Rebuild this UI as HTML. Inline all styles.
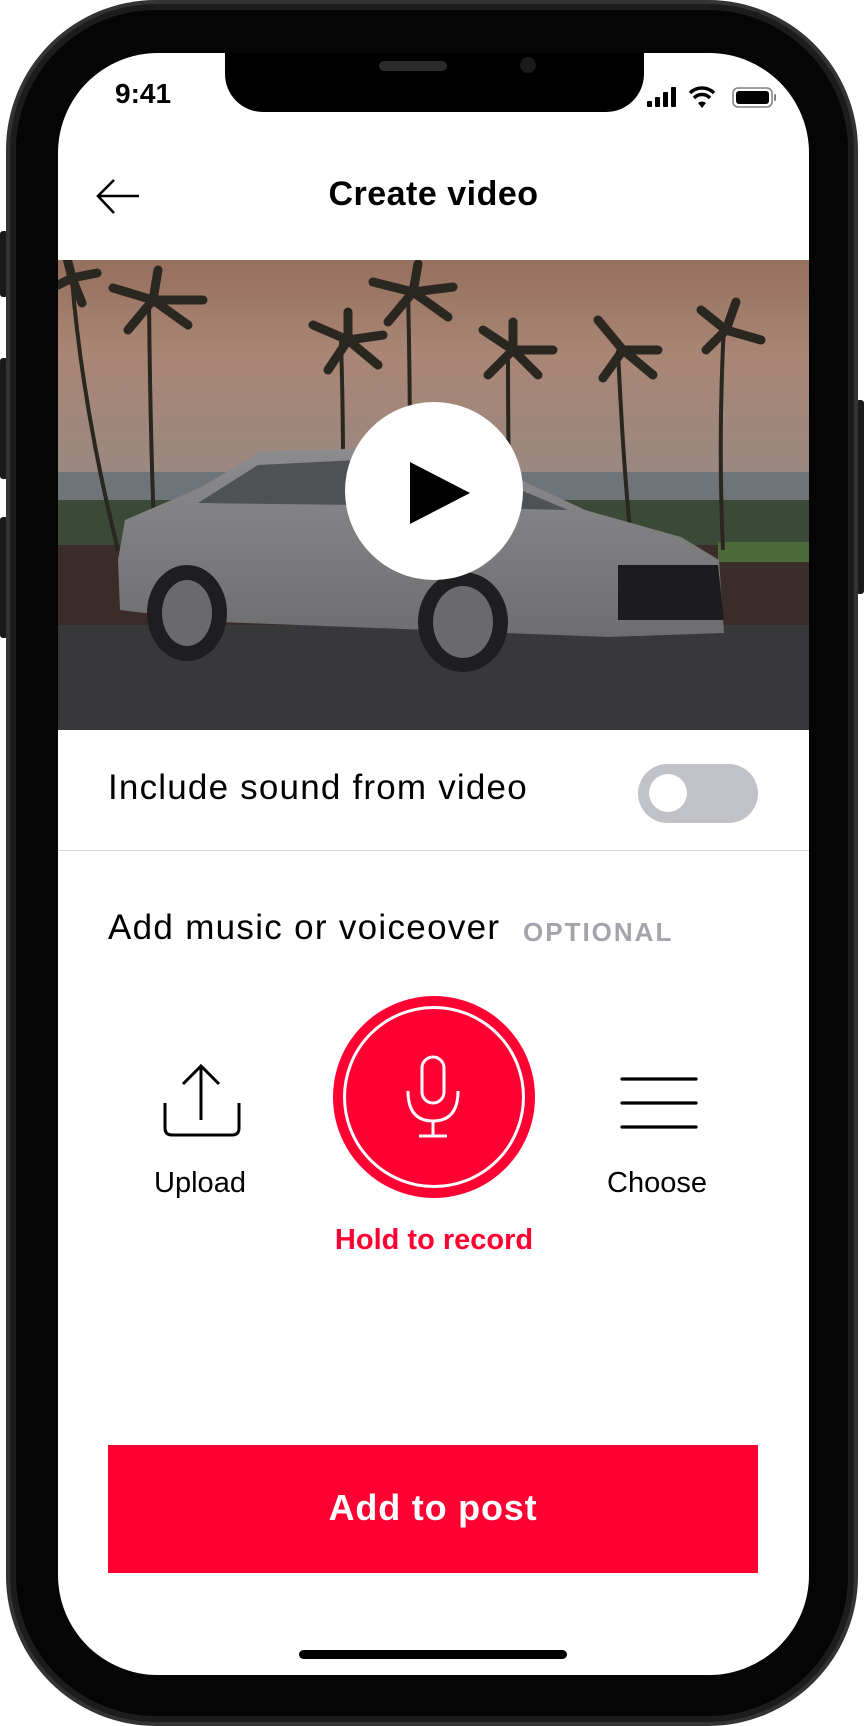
<!DOCTYPE html>
<html><head><meta charset="utf-8"><style>
*{margin:0;padding:0;box-sizing:border-box}
body{width:864px;height:1726px;background:#fff;position:relative;overflow:hidden;font-family:"Liberation Sans",sans-serif}
.a{position:absolute}
.btn{background:#1a1a1a;border-radius:3px}
.t{position:absolute;white-space:nowrap}
</style></head><body>
<div class="a btn" style="left:0;top:231px;width:8px;height:66px"></div>
<div class="a btn" style="left:0;top:358px;width:8px;height:121px"></div>
<div class="a btn" style="left:0;top:517px;width:8px;height:121px"></div>
<div class="a btn" style="left:856px;top:400px;width:8px;height:194px"></div>
<div class="a" style="left:6px;top:0;width:852px;height:1726px;border-radius:150px;background:#333"></div>
<div class="a" style="left:10px;top:4px;width:844px;height:1718px;border-radius:146px;background:#1c1c1c"></div>
<div class="a" style="left:16px;top:10px;width:832px;height:1706px;border-radius:140px;background:#050505"></div>
<div class="a" style="left:58px;top:53px;width:751px;height:1622px;border-radius:100px;background:#fff;overflow:hidden">
  <div class="t" style="left:57px;top:25px;font-size:28px;font-weight:bold;color:#000">9:41</div>
  <svg class="a" style="left:0;top:0" width="751" height="80">
    <rect x="589" y="48" width="5" height="6" rx="1" fill="#000"/>
    <rect x="597" y="44" width="5" height="10" rx="1" fill="#000"/>
    <rect x="605" y="39" width="5" height="15" rx="1" fill="#000"/>
    <rect x="613" y="34" width="5" height="20" rx="1" fill="#000"/>
    <path d="M632 40 a17 17 0 0 1 24 0" stroke="#000" stroke-width="3.5" fill="none"/>
    <path d="M636 45 a11 11 0 0 1 16 0" stroke="#000" stroke-width="3.5" fill="none"/>
    <path d="M644 55 l-4 -5 a6 6 0 0 1 8 0z" fill="#000"/>
    <rect x="675" y="35" width="39" height="19" rx="5" fill="none" stroke="#000" stroke-width="1.5" opacity=".5"/>
    <rect x="678" y="38" width="33" height="13" rx="3" fill="#000"/>
    <rect x="716" y="41" width="2" height="7" rx="1" fill="#000" opacity=".5"/>
  </svg>
  <div class="a" style="left:167px;top:0;width:419px;height:59px;background:#000;border-radius:0 0 38px 38px"></div>
  <div class="a" style="left:321px;top:8px;width:68px;height:10px;border-radius:5px;background:#2a2a2a"></div>
  <div class="a" style="left:462px;top:4px;width:16px;height:16px;border-radius:8px;background:#1a1a1a"></div>
  <svg class="a" style="left:36px;top:124px" width="50" height="40"><path d="M45 19 H4 M20 3 L4 19 L20 36" stroke="#000" stroke-width="2.6" fill="none"/></svg>
  <div class="t" style="left:0;width:751px;text-align:center;top:122px;font-size:34px;font-weight:bold;color:#000;letter-spacing:0.5px">Create video</div>
  <svg class="a" style="left:0;top:207px" width="751" height="470">
    <defs><linearGradient id="sky" x1="0" y1="0" x2="0" y2="1"><stop offset="0" stop-color="#96705e"/><stop offset=".45" stop-color="#a98675"/><stop offset="1" stop-color="#9a8880"/></linearGradient>
    <linearGradient id="car" x1="0" y1="0" x2="0" y2="1"><stop offset="0" stop-color="#8c8c8e"/><stop offset="1" stop-color="#6e6e70"/></linearGradient></defs>
    <rect width="751" height="215" fill="url(#sky)"/>
    <rect y="212" width="751" height="50" fill="#6e7478"/>
    <rect y="240" width="751" height="60" fill="#3b4a36"/>
    <rect y="285" width="751" height="85" fill="#3a2c28"/>
    <rect x="660" y="282" width="91" height="20" fill="#4d6a3a"/>
    <rect y="365" width="751" height="105" fill="#38383a"/>
    <g stroke="#2a2620" stroke-width="4" fill="none">
      <path d="M14 20 Q25 150 60 290"/><path d="M91 40 Q92 160 96 270"/><path d="M283 80 Q285 150 285 200"/><path d="M350 30 Q352 120 352 200"/><path d="M450 90 Q450 200 452 270"/><path d="M560 90 Q565 200 572 270"/><path d="M666 65 Q660 180 665 290"/>
    </g>
    <g fill="none" stroke="#2a2620" stroke-width="9" stroke-linecap="round">
      <path d="M14 18 l-20 10 M14 18 l25 -5 M14 18 l10 25 M14 18 l-5 -20"/>
      <path d="M95 40 l-40 -12 M95 40 l50 0 M95 40 l-25 30 M95 40 l35 25 M95 40 l5 -30"/>
      <path d="M290 80 l-35 -15 M290 80 l35 -5 M290 80 l-20 30 M290 80 l30 25 M290 80 l0 -28"/>
      <path d="M355 32 l-40 -10 M355 32 l40 -5 M355 32 l-25 30 M355 32 l35 25 M355 32 l5 -28"/>
      <path d="M455 90 l-30 -20 M455 90 l40 0 M455 90 l-25 25 M455 90 l25 25 M455 90 l0 -28"/>
      <path d="M565 90 l-25 -30 M565 90 l35 0 M565 90 l-20 28 M565 90 l30 25"/>
      <path d="M668 70 l-25 -20 M668 70 l35 10 M668 70 l-20 20 M668 70 l10 -28"/>
    </g>
    <path d="M62 350 L60 300 L67 260 L144 227 L201 192 L311 188 L420 200 L527 250 L623 277 L661 300 L666 373 L551 377 L163 362 Z" fill="url(#car)"/>
    <path d="M140 243 L200 205 L300 200 L420 212 L510 250 L300 245 Z" fill="#4e5254"/>
    <path d="M560 305 L660 305 L666 360 L560 360 Z" fill="#1c1c1e"/>
    <ellipse cx="129" cy="353" rx="40" ry="48" fill="#1e1e20"/><ellipse cx="129" cy="353" rx="25" ry="33" fill="#6a6a6c"/>
    <ellipse cx="405" cy="362" rx="45" ry="50" fill="#1e1e20"/><ellipse cx="405" cy="362" rx="30" ry="36" fill="#6a6a6c"/>
  </svg>
  <div class="a" style="left:287px;top:349px;width:178px;height:178px;border-radius:50%;background:#fff"></div>
  <svg class="a" style="left:352px;top:405px" width="64" height="70"><path d="M0 4 L60 35 L0 66Z" fill="#000"/></svg>
  <div class="t" style="left:50px;top:715px;font-size:35px;color:#000;letter-spacing:1.2px">Include sound from video</div>
  <div class="a" style="left:580px;top:711px;width:120px;height:59px;border-radius:30px;background:#c0c2c8"></div>
  <div class="a" style="left:591px;top:721px;width:38px;height:38px;border-radius:50%;background:#fff"></div>
  <div class="a" style="left:0;top:797px;width:751px;height:1px;background:#d8d8d8"></div>
  <div class="t" style="left:50px;top:855px;font-size:35px;color:#000;letter-spacing:1.3px">Add music or voiceover</div>
  <div class="t" style="left:465px;top:864px;font-size:26px;font-weight:bold;color:#a4a4ac;letter-spacing:2px">OPTIONAL</div>
  <svg class="a" style="left:103px;top:1007px" width="82" height="80">
    <path d="M40 6 V60 M22 24 L40 6 L58 24" stroke="#000" stroke-width="3" fill="none"/>
    <path d="M4 43 V68 Q4 75 11 75 H71 Q78 75 78 68 V43" stroke="#000" stroke-width="3" fill="none"/>
  </svg>
  <div class="t" style="left:142px;width:0;top:1114px;font-size:29px;color:#000;display:flex;justify-content:center">Upload</div>
  <div class="a" style="left:275px;top:943px;width:202px;height:202px;border-radius:50%;background:#ff0033"></div>
  <div class="a" style="left:285px;top:953px;width:182px;height:182px;border-radius:50%;border:3px solid #fff"></div>
  <svg class="a" style="left:344px;top:1000px" width="64" height="90">
    <rect x="20" y="4" width="22" height="46" rx="11" stroke="#fff" stroke-width="3" fill="none"/>
    <path d="M6 38 Q6 68 31 68 Q56 68 56 38 M31 68 V83 M17 83 H45" stroke="#fff" stroke-width="3" fill="none"/>
  </svg>
  <div class="t" style="left:376px;width:0;top:1171px;font-size:29px;font-weight:bold;color:#ff0033;display:flex;justify-content:center">Hold to record</div>
  <svg class="a" style="left:562px;top:1022px" width="78" height="56"><path d="M2 4 H76 M2 28 H76 M2 52 H76" stroke="#000" stroke-width="3.2" stroke-linecap="round"/></svg>
  <div class="t" style="left:599px;width:0;top:1114px;font-size:29px;color:#000;display:flex;justify-content:center">Choose</div>
  <div class="a" style="left:50px;top:1392px;width:650px;height:128px;background:#ff0033"></div>
  <div class="t" style="left:50px;width:650px;text-align:center;top:1434px;font-size:36px;font-weight:bold;color:#fff;letter-spacing:0.8px">Add to post</div>
  <div class="a" style="left:241px;top:1597px;width:268px;height:9px;border-radius:5px;background:#000"></div>
</div>
</body></html>
